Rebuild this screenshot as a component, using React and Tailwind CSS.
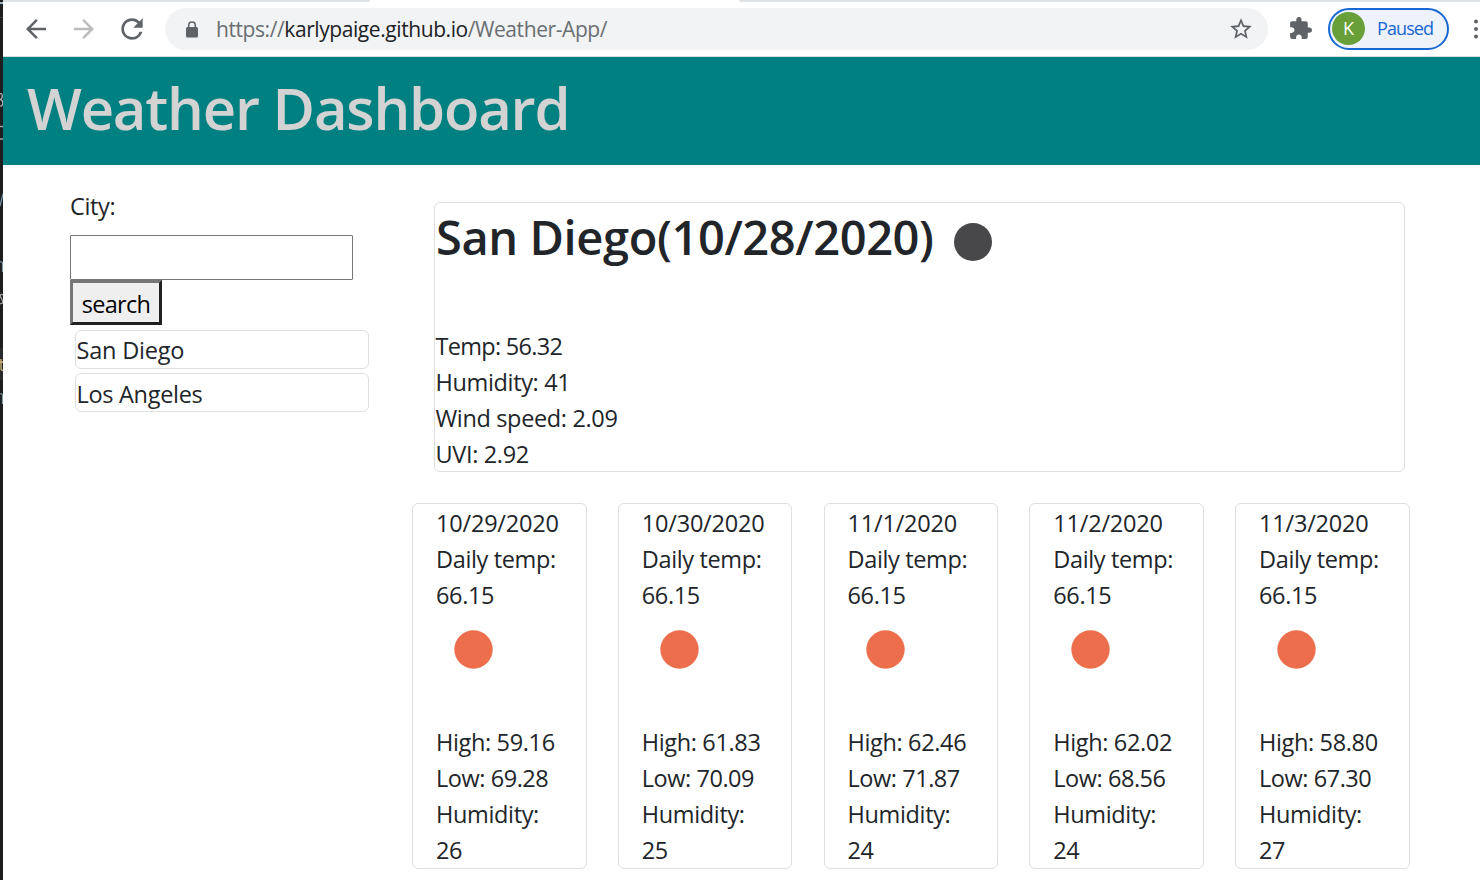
import { MdArrowBack, MdArrowForward, MdRefresh, MdStarBorder, MdExtension } from 'react-icons/md';

const forecast = [
  { date: '10/29/2020', temp: '66.15', high: '59.16', low: '69.28', humidity: '26' },
  { date: '10/30/2020', temp: '66.15', high: '61.83', low: '70.09', humidity: '25' },
  { date: '11/1/2020', temp: '66.15', high: '62.46', low: '71.87', humidity: '24' },
  { date: '11/2/2020', temp: '66.15', high: '62.02', low: '68.56', humidity: '24' },
  { date: '11/3/2020', temp: '66.15', high: '58.80', low: '67.30', humidity: '27' },
];

function EditorSliver() {
  return (
    <div className="h-[880px] w-[3px] shrink-0 overflow-hidden bg-[#1e1e1e]">
      <svg width="3" height="880" viewBox="0 0 3 880" fill="none">
        <path d="M0 3H3" stroke="#9cb7cc" strokeWidth="2" />
        <path d="M0 17.5H3" stroke="#3c3c3c" />
        <rect y="348" width="3" height="32" fill="#29292c" />
        <path d="M0 94C3 92 3 99 0 99.500C4 100 3.500 107 0 106" stroke="#b9b9b9" strokeWidth="1.200" />
        <path d="M0 126.500H3M0 139H3" stroke="#a4a4a4" strokeWidth="1.300" />
        <path d="M0 206L3 194" stroke="#7898af" strokeWidth="1.200" />
        <path d="M0 262Q2.500 261 2.500 264V272" stroke="#8299a8" strokeWidth="1.200" />
        <path d="M3 295Q0 293 .5 297Q3 300 2.500 303L0 304" stroke="#a4a4a4" strokeWidth="1.200" />
        <path d="M1 359V368Q1 371 3 370M0 362H3" stroke="#d7ba7d" strokeWidth="1.300" />
        <path d="M0 394Q2.500 393 2.500 396V404" stroke="#8299a8" strokeWidth="1.200" />
      </svg>
    </div>
  );
}

function BrowserBar() {
  return (
    <div className="h-[57px] border-b border-[#d9dcdf] bg-white">
      <div className="flex h-[2px] justify-between">
        <div className="w-[367px] rounded-br-sm bg-[#dee1e6]" />
        <div className="w-[741px] rounded-bl-sm bg-[#dee1e6]" />
      </div>
      <div className="flex h-[53px] items-center overflow-hidden">
        <MdArrowBack className="ml-[18px] size-[30px] shrink-0 text-[#5f6368]" />
        <MdArrowForward className="ml-[18px] size-[30px] shrink-0 text-[#babcbe]" />
        <MdRefresh className="ml-[17px] size-[32px] shrink-0 text-[#5f6368]" />
        <div className="ml-[17px] flex h-[42px] w-[1103px] shrink-0 items-center rounded-full bg-[#f1f3f4]">
          <svg className="ml-[21px] mt-[2px] shrink-0" width="12" height="17" viewBox="0 0 12 17">
            <rect y="6" width="12" height="10.500" rx="1.500" fill="#5f6368" />
            <path d="M2.700 7V4.200a3.300 3.300 0 0 1 6.600 0V7" fill="none" stroke="#5f6368" strokeWidth="1.500" />
          </svg>
          <div className="ml-[18px] grow whitespace-nowrap pt-[2px] text-[21px] tracking-[-0.42px] text-[#6a6e73]">
            https://<span className="text-[#202124]">karlypaige.github.io</span>/Weather-App/
          </div>
          <MdStarBorder className="mr-[14px] size-[26px] text-[#5f6368]" />
        </div>
        <MdExtension className="ml-[20px] size-[25px] shrink-0 text-[#5f6368]" />
        <div className="ml-[15px] flex h-[42px] w-[121px] shrink-0 items-center rounded-full border-2 border-[#1967d2] bg-[#edf2fb] pl-[2px]">
          <div className="flex size-[33px] shrink-0 items-center justify-center rounded-full bg-[#689f38] text-[18px] text-white">K</div>
          <span className="ml-[12px] text-[18px] tracking-[-0.9px] text-[#1967d2]">Paused</span>
        </div>
        <svg className="ml-[23px] shrink-0" width="8" height="24" viewBox="0 0 8 24" fill="#5f6368">
          <circle cx="4" cy="4.500" r="2" />
          <circle cx="4" cy="12" r="2" />
          <circle cx="4" cy="19.500" r="2" />
        </svg>
      </div>
    </div>
  );
}

function SearchPanel() {
  return (
    <aside className="ml-[67px] w-[299px] shrink-0 pt-[23px]">
      <label htmlFor="city" className="block h-[47px]">City:</label>
      <input id="city" className="block h-[45px] w-[283px] rounded-[1px] border border-[#767676] bg-white px-1 outline-none" />
      <button className="block h-[45px] w-[92px] border-[3px] border-t-[#767676] border-r-[#212121] border-b-[#212121] border-l-[#767676] bg-[#efefef] text-center leading-[43px] tracking-[-0.7px] text-black">
        search
      </button>
      <ul className="ml-[5px] mt-[5px] flex flex-col gap-[4px]">
        <li className="h-[39px] rounded-[6px] border border-[#dfdfdf] pl-[0.5px] leading-[39px] tracking-[-0.2px]">San Diego</li>
        <li className="h-[39px] rounded-[6px] border border-[#dfdfdf] pl-[0.5px] leading-[41px] tracking-[-0.3px]">Los Angeles</li>
      </ul>
    </aside>
  );
}

function CurrentWeather() {
  return (
    <section className="ml-[22px] h-[270px] w-[971px] rounded-[6px] border border-[#dfdfdf] pl-[0.5px]">
      <div className="flex h-[125px] items-start">
        <h2 className="whitespace-nowrap pl-[0.5px] pt-[5px] text-[47px] font-semibold leading-[58px] tracking-[-0.4px]">San Diego(10/28/2020)</h2>
        <svg className="ml-[19px] mt-[19px]" width="40" height="40" viewBox="0 0 40 40">
          <circle cx="20" cy="20" r="19" fill="#48484a" />
        </svg>
      </div>
      <p className="tracking-[-0.7px]">Temp: 56.32</p>
      <p>Humidity: 41</p>
      <p>Wind speed: 2.09</p>
      <p>UVI: 2.92</p>
    </section>
  );
}

function DayCard({ day }) {
  return (
    <article className="h-[366px] w-[174.600px] rounded-[6px] border border-[#dfdfdf] px-[23px] pt-px">
      <p className="tracking-[-0.2px]">{day.date}</p>
      <p className="whitespace-nowrap">Daily temp:</p>
      <p>{day.temp}</p>
      <div className="h-[111px] pl-[17px] pt-[17px]">
        <svg width="41" height="40" viewBox="0 0 41 40">
          <circle cx="20.500" cy="19.500" r="19.200" fill="#ec6e4c" />
        </svg>
      </div>
      <p className="whitespace-nowrap">High: {day.high}</p>
      <p className="whitespace-nowrap tracking-[-0.45px]">Low: {day.low}</p>
      <p>Humidity:</p>
      <p>{day.humidity}</p>
    </article>
  );
}

export default function App() {
  return (
    <div className="flex h-[880px] w-[1480px] overflow-hidden bg-white font-['Open_Sans',sans-serif]">
      <EditorSliver />
      <div className="w-[1477px]">
        <BrowserBar />
        <header className="h-[108px] bg-[#008080] pl-[24px] pt-[15px]">
          <h1 className="whitespace-nowrap text-[58px] font-semibold leading-[72px] tracking-[-1.2px] text-[#d3d3d3]">Weather Dashboard</h1>
        </header>
        <main className="flex text-[23.500px] leading-[36px] tracking-[-0.35px] text-[#212529]">
          <SearchPanel />
          <div className="ml-[43px] pt-[37px]">
            <CurrentWeather />
            <div className="mt-[31px] flex w-[997.600px] justify-between">
              {forecast.map((day) => (
                <DayCard key={day.date} day={day} />
              ))}
            </div>
          </div>
        </main>
      </div>
    </div>
  );
}
